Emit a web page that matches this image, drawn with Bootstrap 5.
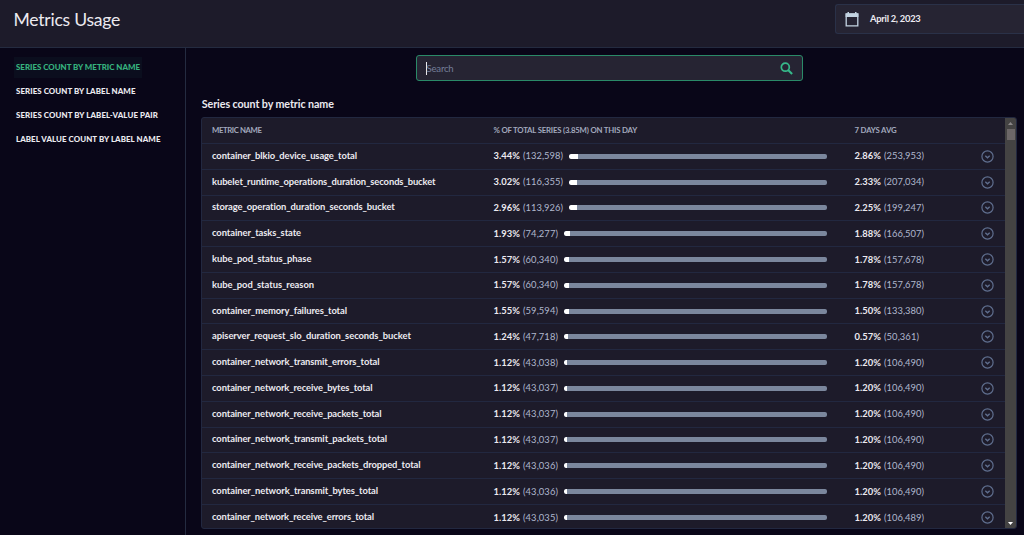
<!DOCTYPE html>
<html lang="en">
<head>
<meta charset="utf-8">
<meta name="viewport" content="width=device-width, initial-scale=1">
<title>Metrics Usage</title>
<link rel="stylesheet" href="https://cdn.jsdelivr.net/npm/bootstrap@5.3.0/dist/css/bootstrap.min.css">
<style>
body{background:#090618;color:#eceaf0;font-family:Lato,"Open Sans",sans-serif;font-size:9.4px;line-height:14px}
.topbar{height:48px;background:#1d1b2a;border-bottom:1px solid #242b40;padding:4px 0 0 13.5px}
.title{font-size:17.6px;line-height:31px;font-weight:400}
.datebox{width:189px;height:30px;background:#262433;border:1px solid #2a3148;border-right:0;border-radius:3px 0 0 3px;padding-left:9px;gap:11px;font-weight:700}
.side{width:186px;border-right:1px solid #242b40;padding:9px 0 0 14px;gap:3px}
.side a{font-size:7.9px;font-weight:900;line-height:21px;height:21px;padding:0 2px;color:#eceaf0;text-decoration:none;white-space:nowrap}
.side a.active{color:#36b37e;background:#0b0e1e}
.main{padding:7px 7px 0 15px;min-width:0}
.searchbox{width:387px;height:26px;margin-left:214.5px;background:#262433;border:1px solid #2a8a68;border-radius:3px;padding:0 9px}
.caret{width:1px;height:13px;background:#e8e8ee}
.ph{color:#747e98;font-size:9.6px;padding-top:1px}
.heading{font-size:10.7px;line-height:16px;font-weight:700;margin:15px 0 5px .8px}
.panel{height:412px;background:#1d1b2a;border:1px solid #222840;border-radius:3px}
.line{height:25.79px;border-bottom:1px solid #222840;padding-left:10px}
.line:last-child{border-bottom:0}
.line.head{height:26px;color:#a2a9bd;font-size:7.8px;font-weight:700;padding-bottom:1px}
.c1{width:281.5px;font-weight:700}
.line:not(.head) .c1{padding-bottom:1px}
.c2{width:333.5px}
.c3{width:126px}
.muted{color:#b0b8ce}
.track{height:5px;background:#7b879d;border-radius:2px}
.fill{height:5px;background:#fff;border-radius:2px 0 0 2px}
.scroll{width:11px;background:#444343;padding:4px 1px 3px}
.thumb{width:8px;height:11px;background:#6c6768}
</style>
<script src="https://cdn.jsdelivr.net/npm/bootstrap@5.3.0/dist/js/bootstrap.bundle.min.js"></script>
</head>
<body class="vh-100 overflow-hidden d-flex flex-column">
<header class="topbar d-flex justify-content-between flex-shrink-0">
  <h1 class="title m-0"><span class="fit" data-w="106.5">Metrics Usage</span></h1>
  <div class="datebox d-flex align-items-center">
    <svg width="14" height="15" viewBox="0 0 14 15"><path d="M1.2 2h11.600v11.800H1.200z" fill="none" stroke="#c3d3e2" stroke-width="1.300"/><path d="M.6 1.500h12.800V5H.6zM2.500 0H4v2H2.500zM10 0h1.500v2H10z" fill="#c3d3e2"/></svg>
    <span class="fit" data-w="50.500">April 2, 2023</span>
  </div>
</header>
<div class="d-flex flex-grow-1 overflow-hidden">
  <nav class="side d-flex flex-column align-items-start flex-shrink-0">
    <a class="active" href="#"><span class="fit" data-w="124">SERIES COUNT BY METRIC NAME</span></a>
    <a href="#"><span class="fit" data-w="119.500">SERIES COUNT BY LABEL NAME</span></a>
    <a href="#"><span class="fit" data-w="142">SERIES COUNT BY LABEL-VALUE PAIR</span></a>
    <a href="#"><span class="fit" data-w="144.500">LABEL VALUE COUNT BY LABEL NAME</span></a>
  </nav>
  <main class="main flex-grow-1">
    <div class="searchbox d-flex align-items-center">
      <span class="caret"></span><span class="ph flex-grow-1"><span class="fit" data-w="27">Search</span></span>
      <svg width="13" height="13" viewBox="0 0 13 13" fill="none" stroke="#36b98a" stroke-width="1.700"><circle cx="5.300" cy="5.200" r="4"/><path d="M8.100 8l4 4" stroke-width="2.100"/></svg>
    </div>
    <h2 class="heading"><span class="fit" data-w="132">Series count by metric name</span></h2>
    <section class="panel d-flex overflow-hidden">
      <div class="flex-grow-1" id="rows">
        <div class="line head d-flex align-items-center">
          <div class="c1"><span class="fit" data-w="49.500">METRIC NAME</span></div>
          <div class="c2"></div>
        </div>
      </div>
      <div class="scroll d-flex flex-column align-items-center">
        <svg width="5" height="3"><path d="M0 3L2.500 0 5 3z" fill="#8b8889"/></svg>
        <div class="thumb mt-1"></div>
        <svg class="mt-auto" width="5" height="3"><path d="M0 0h5L2.500 3z" fill="#fff"/></svg>
      </div>
    </section>
  </main>
</div>
<script>
const metrics = [
 ['container_blkio_device_usage_total',145,'3.44','132,598','2.86','253,953'],
 ['kubelet_runtime_operations_duration_seconds_bucket',224,'3.02','116,355','2.33','207,034'],
 ['storage_operation_duration_seconds_bucket',183,'2.96','113,926','2.25','199,247'],
 ['container_tasks_state',89,'1.93','74,277','1.88','166,507'],
 ['kube_pod_status_phase',99.5,'1.57','60,340','1.78','157,678'],
 ['kube_pod_status_reason',102,'1.57','60,340','1.78','157,678'],
 ['container_memory_failures_total',135,'1.55','59,594','1.50','133,380'],
 ['apiserver_request_slo_duration_seconds_bucket',199,'1.24','47,718','0.57','50,361'],
 ['container_network_transmit_errors_total',167.5,'1.12','43,038','1.20','106,490'],
 ['container_network_receive_bytes_total',160.5,'1.12','43,037','1.20','106,490'],
 ['container_network_receive_packets_total',169.5,'1.12','43,037','1.20','106,490'],
 ['container_network_transmit_packets_total',175,'1.12','43,037','1.20','106,490'],
 ['container_network_receive_packets_dropped_total',208.5,'1.12','43,036','1.20','106,490'],
 ['container_network_transmit_bytes_total',166,'1.12','43,036','1.20','106,490'],
 ['container_network_receive_errors_total',162,'1.12','43,035','1.20','106,489']
];
const fit = (w, t, c = '') => `<span class="fit ${c}" data-w="${w}">${t}</span>`;
const value = (p, n) => `<span class="text-nowrap d-flex flex-shrink-0"><b class="me-1 d-inline-block" style="width:25.5px">${fit(26.5, p + '%')}</b>${fit(n.length > 6 ? 40 : 35, '(' + n + ')', 'muted')}</span>`;
const rows = document.getElementById('rows');
const head = rows.firstElementChild;
head.lastElementChild.innerHTML = fit(143.5, '% OF TOTAL SERIES (3.85M) ON THIS DAY');
head.insertAdjacentHTML('beforeend', `<div style="margin-left:27.5px">${fit(42, '7 DAYS AVG')}</div>`);
rows.insertAdjacentHTML('beforeend', metrics.map(([name, w, p, n, ap, an]) => `
<div class="line d-flex align-items-center">
  <div class="c1">${fit(w, name)}</div>
  <div class="c2 d-flex align-items-center">${value(p, n)}<div class="track flex-grow-1 overflow-hidden" style="margin-left:6px"><div class="fill" style="width:${Math.max(+p + 0.2, 1.3)}%"></div></div></div>
  <div class="c3" style="margin-left:27.5px">${value(ap, an)}</div>
  <svg width="13" height="13" viewBox="0 0 13 13" fill="none" stroke="#5f6e8e" stroke-width="1.2"><circle cx="6.5" cy="6.5" r="5.6"/><path d="M4.300 5.700l2.200 2 2.200-2" stroke-width="1.400"/></svg>
</div>`).join(''));
// Space the letters of each label so that it fills its data-w width.
document.querySelectorAll('.fit').forEach(el => {
  const n = el.textContent.length;
  el.style.whiteSpace = 'nowrap';
  el.style.letterSpacing = (el.dataset.w - el.getBoundingClientRect().width) / n + 'px';
});
</script>
</body>
</html>
